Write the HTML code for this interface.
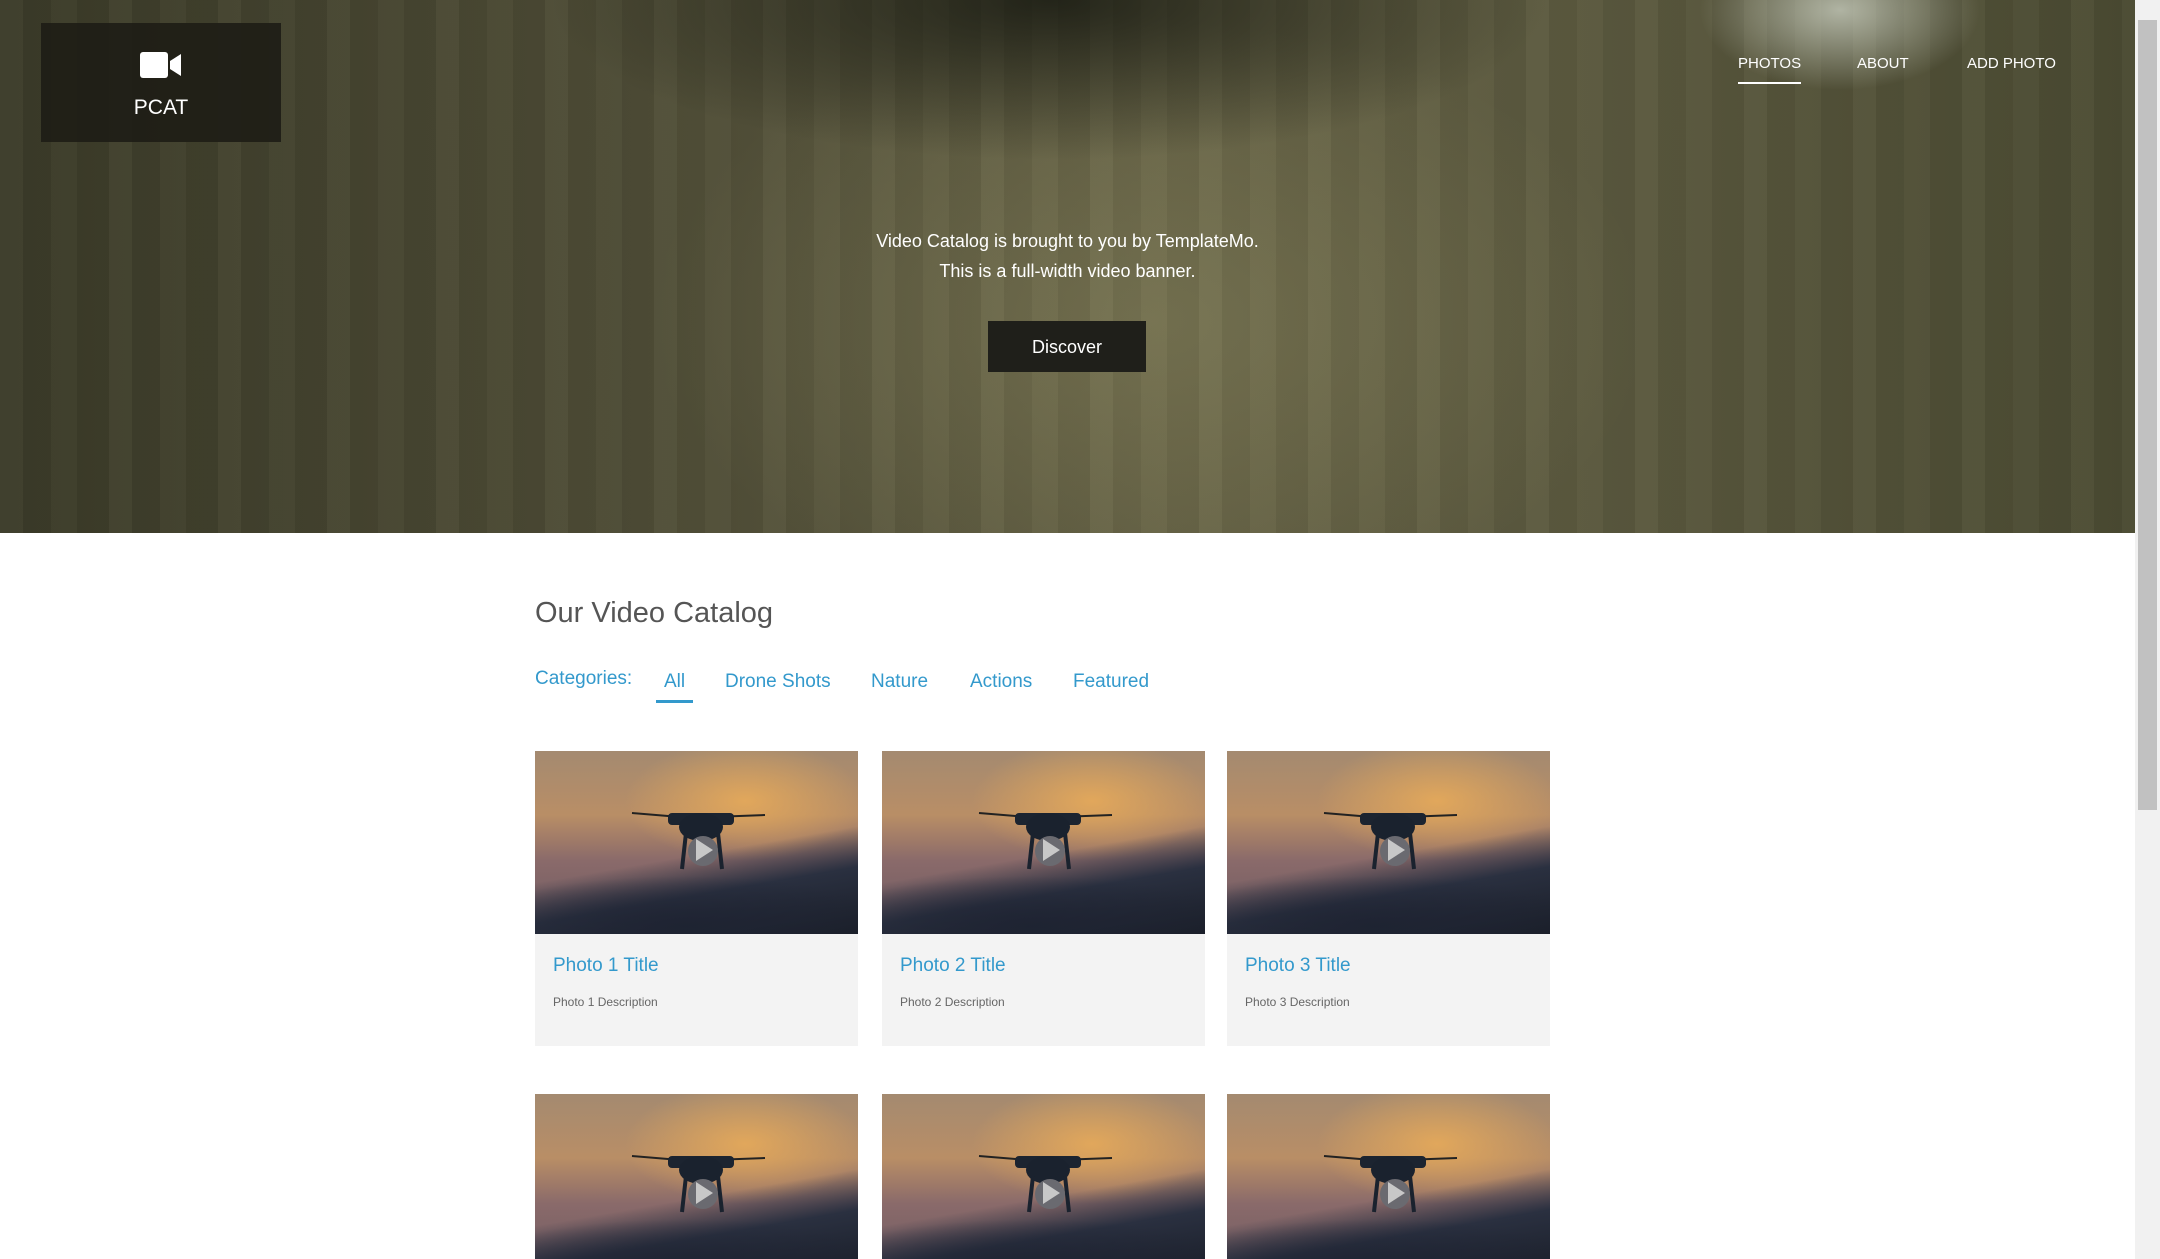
<!DOCTYPE html>
<html><head><meta charset="utf-8"><style>
*{margin:0;padding:0;box-sizing:border-box}
html,body{width:2160px;height:1259px;overflow:hidden;background:#fff;font-family:"Liberation Sans",sans-serif}
#page{position:absolute;left:0;top:0;width:2135px;height:1259px;overflow:hidden}
.hero{position:absolute;left:0;top:0;width:2135px;height:533px;
background:
radial-gradient(ellipse 140px 80px at 1840px 10px,rgba(200,205,190,.8),rgba(200,205,190,0) 100%),
radial-gradient(ellipse 500px 160px at 1050px 0px,rgba(20,22,15,.8),rgba(20,22,15,0) 100%),
repeating-linear-gradient(90deg,rgba(255,255,220,.03) 0 23px,rgba(0,0,0,.03) 23px 51px,rgba(255,255,220,.02) 51px 77px,rgba(0,0,0,.04) 77px 109px),
radial-gradient(ellipse 500px 300px at 1150px 320px,rgba(160,155,110,.3),rgba(0,0,0,0) 100%),
linear-gradient(90deg,#3a3a28 0%,#4e4c36 30%,#636044 55%,#5a583e 75%,#4a4a32 100%)}
.logo{position:absolute;left:41px;top:23px;width:240px;height:119px;background:rgba(30,29,22,.92);color:#fff;text-align:center}
.logo .t{position:absolute;left:0;right:0;top:73px;font-size:21px}
.nav{position:absolute;top:55px;color:#fff;font-size:15px}
.nav.a:after{content:"";position:absolute;left:0;right:0;top:27px;height:2px;background:#fff}
.ht{position:absolute;left:0;width:2135px;text-align:center;color:#fff;font-size:18px}
.btn{position:absolute;left:988px;top:321px;width:158px;height:51px;background:#1f1f1a;color:#fff;font-size:18px;text-align:center;line-height:53px}
h2{position:absolute;left:535px;top:597px;font-weight:normal;font-size:29px;color:#555}
.cat{position:absolute;top:671px;font-size:19px;color:#3399cc}
.card{position:absolute;width:323px;background:#f3f3f3}
.img{position:relative;width:323px;height:183px;overflow:hidden;
background:
radial-gradient(ellipse 220px 50px at 150px 175px,rgba(30,35,50,.95),rgba(30,35,50,0) 100%),
linear-gradient(170deg,rgba(0,0,0,0) 55%,#2a3040 72%,#1a1e28 100%),
radial-gradient(ellipse 120px 60px at 210px 50px,rgba(230,170,90,.9),rgba(230,170,90,0) 100%),
linear-gradient(180deg,#a48a70 0%,#b98e66 35%,#8a6a6a 60%,#6c5a62 100%)}
.ct{position:absolute;left:18px;top:204px;font-size:19px;color:#3399cc}
.cd{position:absolute;left:18px;top:244px;font-size:12px;color:#666}
.sb{position:absolute;left:2135px;top:0;width:25px;height:1259px;background:#f1f1f1}
.th{position:absolute;left:2138px;top:20px;width:19px;height:790px;background:#c1c1c1}
</style></head><body>
<div id="page">
<div class="hero"></div>
<div class="logo"><svg style="position:absolute;left:99px;top:28px" width="42" height="28" viewBox="0 0 42 28"><rect x="0" y="1" width="28" height="26" rx="3" fill="#fff"/><path d="M30 10 L41 3 L41 25 L30 18 Z" fill="#fff"/></svg><div class="t">PCAT</div></div>
<div class="nav a" style="left:1738px">PHOTOS</div>
<div class="nav" style="left:1857px">ABOUT</div>
<div class="nav" style="left:1967px">ADD PHOTO</div>
<div class="ht" style="top:231px">Video Catalog is brought to you by TemplateMo.</div>
<div class="ht" style="top:261px">This is a full-width video banner.</div>
<div class="btn">Discover</div>
<h2>Our Video Catalog</h2>
<div class="cat" style="left:535px;top:668px">Categories:</div>
<div class="cat" style="left:664px">All</div>
<div style="position:absolute;left:656px;top:700px;width:37px;height:3px;background:#3399cc"></div>
<div class="cat" style="left:725px">Drone Shots</div>
<div class="cat" style="left:871px">Nature</div>
<div class="cat" style="left:970px">Actions</div>
<div class="cat" style="left:1073px">Featured</div>
<div id="cards"></div>
<script>
var xs=[535,882,1227],ys=[751,1094],h='';
var drone='<svg style="position:absolute;left:95px;top:50px" width="140" height="75" viewBox="0 0 140 75"><path d="M2 12 L50 16 M82 16 L135 14" stroke="#222" stroke-width="2"/><rect x="38" y="12" width="66" height="12" rx="4" fill="#1c2430"/><ellipse cx="71" cy="26" rx="22" ry="14" fill="#1a222e"/><path d="M56 32 L52 68 M88 32 L92 68" stroke="#1a222e" stroke-width="4"/><circle cx="73" cy="50" r="15" fill="#6a6a70"/><path d="M66 38 L66 60 L83 49 Z" fill="#c8c8c8"/></svg>';
for(var r=0;r<2;r++)for(var c=0;c<3;c++){var n=r*3+c+1;h+='<div class="card" style="left:'+xs[c]+'px;top:'+ys[r]+'px;height:295px"><div class="img">'+drone+'</div><div class="ct">Photo '+n+' Title</div><div class="cd">Photo '+n+' Description</div></div>';}
document.getElementById('cards').innerHTML=h;
</script>
</div>
<div class="sb"></div><div class="th"></div>
</body></html>
